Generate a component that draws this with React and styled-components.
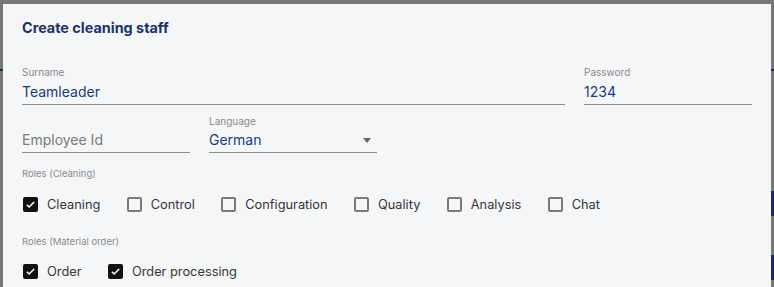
import React from "react";
import styled, { createGlobalStyle } from "styled-components";

const navy = "#1e3266";
const valueBlue = "#223a78";
const labelGray = "#8a8a8a";

const GlobalStyle = createGlobalStyle`
  html, body {
    margin: 0;
    padding: 0;
    background: #787878;
    font-family: Inter, "Noto Sans", "Liberation Sans", sans-serif;
  }
`;

const Page = styled.div`
  display: flex;
  width: 774px;
  height: 287px;
  overflow: hidden;
  background: #787878;
`;

const Edge = styled.div`
  width: 3px;
  flex: none;
  display: flex;
  flex-direction: column;
`;

const Sliver = styled.div`
  height: ${(p) => p.$h}px;
  margin-top: ${(p) => p.$top}px;
  background: #1b2a5c;
  flex: none;
`;

const Dialog = styled.div`
  flex: 1;
  margin-top: 4px;
  background: #f5f6f8;
  padding: 14px 19px 0 19px;
  display: flex;
  flex-direction: column;
`;

const Title = styled.h2`
  margin: 0 0 28px;
  font-size: 14.4px;
  line-height: 20px;
  font-weight: 700;
  color: ${navy};
`;

const Row = styled.div`
  display: flex;
  gap: 19px;
  margin-bottom: ${(p) => p.$mb || 0}px;
`;

const Field = styled.div`
  display: flex;
  flex-direction: column;
  width: ${(p) => (p.$grow ? "auto" : "168px")};
  flex: ${(p) => (p.$grow ? 1 : "none")};
`;

const Label = styled.div`
  font-size: 10px;
  line-height: 12px;
  color: ${labelGray};
  height: 12px;
  margin-bottom: 3.5px;
`;

const Value = styled.div`
  display: flex;
  align-items: center;
  justify-content: space-between;
  font-size: 14px;
  line-height: 20px;
  padding-bottom: 2px;
  border-bottom: 1px solid #8c8c8c;
  color: ${(p) => (p.$placeholder ? "#7a7a7a" : valueBlue)};
`;

const Caret = styled.span`
  width: 0;
  height: 0;
  margin-right: 6px;
  border-left: 4.5px solid transparent;
  border-right: 4.5px solid transparent;
  border-top: 5px solid #666;
`;

const GroupLabel = styled.div`
  font-size: 9.5px;
  line-height: 12px;
  color: ${labelGray};
  margin-bottom: ${(p) => p.$mb}px;
`;

const CheckRow = styled.div`
  display: flex;
  align-items: center;
  gap: 26.4px;
  height: 24px;
  padding-left: 1px;
  margin-bottom: ${(p) => p.$mb || 0}px;
`;

const CheckItem = styled.label`
  display: flex;
  align-items: center;
  gap: 9px;
  font-size: 12.8px;
  color: #363636;
`;

const Box = styled.span`
  box-sizing: border-box;
  width: 15px;
  height: 15px;
  border-radius: 2px;
  display: flex;
  align-items: center;
  justify-content: center;
  border: ${(p) => (p.$checked ? "none" : "2px solid #7a7a7a")};
  background: ${(p) => (p.$checked ? "#111" : "transparent")};
`;

function Check({ label, checked }) {
  return (
    <CheckItem>
      <Box $checked={checked}>
        {checked && (
          <svg width="11" height="11" viewBox="0 0 24 24">
            <path d="M4 12.5l5 5L20 6.5" fill="none" stroke="#fff" strokeWidth="3.4" />
          </svg>
        )}
      </Box>
      {label}
    </CheckItem>
  );
}

export default function App() {
  return (
    <>
      <GlobalStyle />
      <Page>
        <Edge>
          <Sliver $top={69} $h={2} />
        </Edge>
        <Dialog>
          <Title>Create cleaning staff</Title>
          <Row $mb={10}>
            <Field $grow>
              <Label>Surname</Label>
              <Value>Teamleader</Value>
            </Field>
            <Field>
              <Label>Password</Label>
              <Value>1234</Value>
            </Field>
          </Row>
          <Row $mb={15}>
            <Field>
              <Label />
              <Value $placeholder>Employee Id</Value>
            </Field>
            <Field>
              <Label>Language</Label>
              <Value>
                German
                <Caret />
              </Value>
            </Field>
          </Row>
          <GroupLabel $mb={12}>Roles (Cleaning)</GroupLabel>
          <CheckRow $mb={20}>
            <Check label="Cleaning" checked />
            <Check label="Control" />
            <Check label="Configuration" />
            <Check label="Quality" />
            <Check label="Analysis" />
            <Check label="Chat" />
          </CheckRow>
          <GroupLabel $mb={11}>Roles (Material order)</GroupLabel>
          <CheckRow>
            <Check label="Order" checked />
            <Check label="Order processing" checked />
          </CheckRow>
        </Dialog>
        <Edge>
          <Sliver $top={69} $h={2} />
          <Sliver $top={120} $h={25} />
          <Sliver $top={39} $h={25} />
        </Edge>
      </Page>
    </>
  );
}
